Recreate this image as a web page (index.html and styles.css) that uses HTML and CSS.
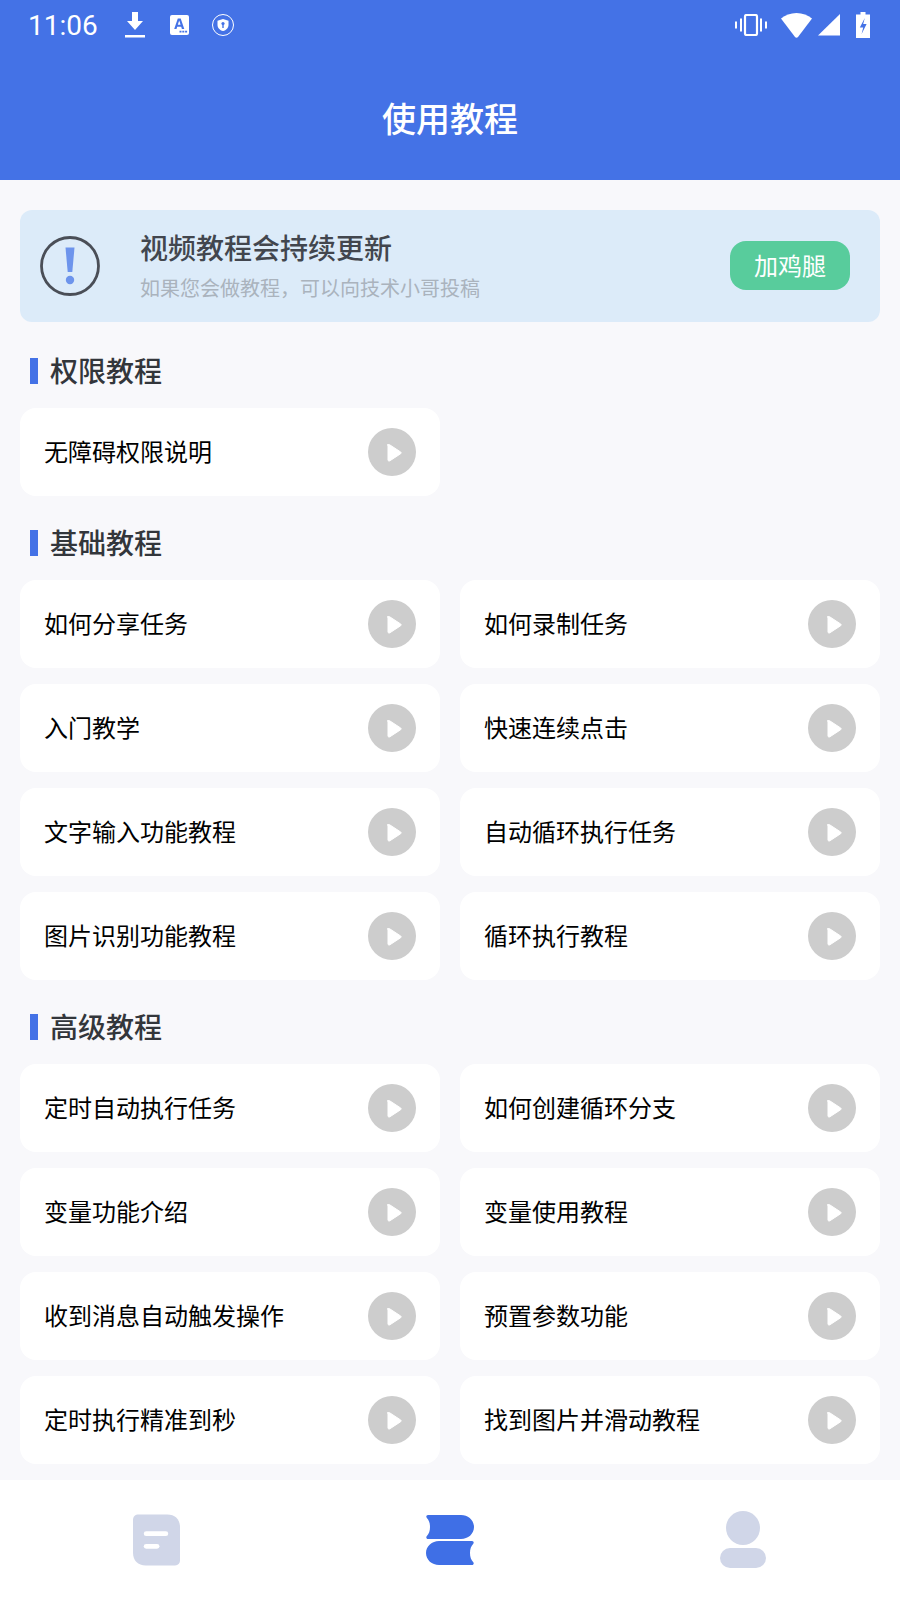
FILE: index.html
```html
<!DOCTYPE html>
<html lang="zh-CN">
<head>
<meta charset="UTF-8">
<title>使用教程</title>
<link rel="stylesheet" href="styles.css">
</head>
<body>

<svg class="defs" width="0" height="0">
  <symbol id="play" viewBox="0 0 48 48">
    <circle cx="24" cy="24" r="24" fill="#cdcdcd"/>
    <path d="M20 16v16c0 .9 1 1.400 1.700.9l11-7.200c.6-.4.6-1.300 0-1.700l-11-7.200c-.7-.5-1.700 0-1.700.9z" fill="#fff" stroke="#fff" stroke-width="1" stroke-linejoin="round"/>
  </symbol>
</svg>

<div class="app">
  <header class="header">
    <div class="status-bar">
      <span class="time">11:06</span>
      <svg class="ic-download" width="20" height="26" viewBox="0 0 20 26"><path d="M7 0h6v9h5l-8 9-8-9h5z" fill="#fff"/><rect x="0" y="23" width="20" height="2.500" fill="#fff"/></svg>
      <svg class="ic-translate" width="19" height="20" viewBox="0 0 19 20"><rect width="19" height="20" rx="2" fill="#fff"/><path d="M7.800 3.500h2.900l3.600 10.500h-2.400l-.7-2.300H7.200L6.500 14H4.200zM7.800 9.800h2.800L9.200 5.400z" fill="#4472e6"/><path d="M9.500 15.800h2v1.800h-2zM12.300 15.800h2v1.800h-2zM15.100 15.800h2v1.800h-2z" fill="#4472e6"/></svg>
      <svg class="ic-shield" width="22" height="22" viewBox="0 0 22 22"><circle cx="11" cy="11" r="10.500" fill="none" stroke="#fff" stroke-width="1"/><path d="M11 5l5.500 1.800v4.200c0 3-2.300 5.200-5.500 6-3.200-.8-5.500-3-5.500-6V6.800z" fill="#fff"/><circle cx="11" cy="9.500" r="1.600" fill="#4472e6"/><rect x="10.300" y="10" width="1.400" height="4" fill="#4472e6"/></svg>
      <span class="status-right">
        <svg width="34" height="22" viewBox="0 0 34 22"><rect x="11" y="1" width="12" height="20" rx="1.500" fill="none" stroke="#fff" stroke-width="2.200"/><path d="M6 4.500h2v13H6zM26 4.500h2v13h-2zM1 7.500h2v7H1zM31 7.500h2v7h-2z" fill="#fff"/></svg>
        <svg width="31" height="25" viewBox="0 0 31 25"><path d="M15.500 0C9.500 0 4.200 2.100 0 5.500l14 18.500c.8 1 2.200 1 3 0L31 5.500C26.800 2.100 21.500 0 15.500 0z" fill="#fff"/></svg>
        <svg width="22" height="22" viewBox="0 0 22 22"><path d="M22 0v21.500H0z" fill="#fff"/></svg>
        <svg width="14" height="26" viewBox="0 0 14 26"><path d="M4.500 0h5v2.500H14V26H0V2.500h4.500z" fill="#fff"/><path d="M8.800 6L3.800 15.500h3.400L5.600 22l5-10H7.200z" fill="#4472e6"/></svg>
      </span>
    </div>
    <h1 class="page-title">使用教程</h1>
  </header>

  <main class="content">
    <div class="banner">
      <svg class="banner-icon" width="60" height="60" viewBox="0 0 60 60">
        <circle cx="30" cy="30" r="28.500" fill="none" stroke="#4a4e57" stroke-width="2.800"/>
        <path d="M25.500 11.500h9l-2.200 24.500h-4.600z" fill="#6d94ec"/>
        <circle cx="30" cy="44" r="4.200" fill="#6d94ec"/>
      </svg>
      <div class="banner-text">
        <div class="banner-title">视频教程会持续更新</div>
        <div class="banner-sub">如果您会做教程，可以向技术小哥投稿</div>
      </div>
      <div class="banner-btn"><span>加鸡腿</span></div>
    </div>

    <section class="section">
      <h2 class="section-title">权限教程</h2>
      <div class="grid">
        <div class="card"><span>无障碍权限说明</span><svg class="play"><use href="#play"/></svg></div>
      </div>
    </section>

    <section class="section">
      <h2 class="section-title">基础教程</h2>
      <div class="grid">
        <div class="card"><span>如何分享任务</span><svg class="play"><use href="#play"/></svg></div>
        <div class="card"><span>如何录制任务</span><svg class="play"><use href="#play"/></svg></div>
        <div class="card"><span>入门教学</span><svg class="play"><use href="#play"/></svg></div>
        <div class="card"><span>快速连续点击</span><svg class="play"><use href="#play"/></svg></div>
        <div class="card"><span>文字输入功能教程</span><svg class="play"><use href="#play"/></svg></div>
        <div class="card"><span>自动循环执行任务</span><svg class="play"><use href="#play"/></svg></div>
        <div class="card"><span>图片识别功能教程</span><svg class="play"><use href="#play"/></svg></div>
        <div class="card"><span>循环执行教程</span><svg class="play"><use href="#play"/></svg></div>
      </div>
    </section>

    <section class="section">
      <h2 class="section-title">高级教程</h2>
      <div class="grid">
        <div class="card"><span>定时自动执行任务</span><svg class="play"><use href="#play"/></svg></div>
        <div class="card"><span>如何创建循环分支</span><svg class="play"><use href="#play"/></svg></div>
        <div class="card"><span>变量功能介绍</span><svg class="play"><use href="#play"/></svg></div>
        <div class="card"><span>变量使用教程</span><svg class="play"><use href="#play"/></svg></div>
        <div class="card"><span>收到消息自动触发操作</span><svg class="play"><use href="#play"/></svg></div>
        <div class="card"><span>预置参数功能</span><svg class="play"><use href="#play"/></svg></div>
        <div class="card"><span>定时执行精准到秒</span><svg class="play"><use href="#play"/></svg></div>
        <div class="card"><span>找到图片并滑动教程</span><svg class="play"><use href="#play"/></svg></div>
      </div>
    </section>
  </main>

  <nav class="tabbar">
    <div class="tab">
      <svg width="47" height="52" viewBox="0 0 48 52"><path d="M6 0h29c8 0 13 5 13 13v34c0 3-2 5-5 5H13C5 52 0 47 0 39V6C0 2 2 0 6 0z" fill="#d0d6e8"/><rect x="11" y="17" width="25" height="5" rx="2.500" fill="#fff"/><rect x="11" y="30" width="16" height="5" rx="2.500" fill="#fff"/></svg>
    </div>
    <div class="tab">
      <svg width="48" height="50" viewBox="0 0 48 50"><path d="M2 0h33c7 0 13 5 13 12s-6 12-13 12H2c-1.500 0-2.200-1.500-1.300-2.700C3 18.800 4 16 4 12S3 5.200.7 2.700C-.2 1.500.5 0 2 0z" fill="#3f6fe6"/><path d="M46 26H13C6 26 0 31 0 38s6 12 13 12h33c1.500 0 2.200-1.500 1.300-2.700C45 44.800 44 42 44 38s1-6.800 3.300-9.300c.9-1.200.2-2.700-1.300-2.700z" fill="#3f6fe6"/></svg>
    </div>
    <div class="tab tab-user">
      <span class="user-head"></span>
      <span class="user-body"></span>
    </div>
  </nav>
</div>

</body>
</html>
```

FILE: styles.css
```css
html, body {margin: 0; padding: 0;}
body {font-family: "Noto Sans CJK SC", "Noto Sans", sans-serif; background: #f8f8fb; color: #000;}
.defs {position: absolute;}
.app {width: 900px; height: 1600px; display: flex; flex-direction: column; overflow: hidden;}

/* header + status bar */
.header {height: 180px; background: #4472e6; color: #fff; flex: none;}
.status-bar {height: 50px; display: flex; align-items: center; padding: 0 30px 0 28px;}
.status-bar svg {flex: none; display: block;}
.time {font-family: Roboto, sans-serif; font-size: 28px; width: 97px;}
.ic-download {margin-right: 25px;}
.ic-translate {margin-right: 23px;}
.status-right {margin-left: auto; display: flex; align-items: center;}
.status-right svg:nth-child(1) {margin-right: 13px;}
.status-right svg:nth-child(2) {margin-right: 6px;}
.status-right svg:nth-child(3) {margin-right: 16px;}
.page-title {margin: 0; padding-top: 44px; text-align: center; font-size: 34px; line-height: 48px; font-weight: 500;}

/* scroll area */
.content {flex: 1; padding: 30px 20px 0;}
.banner {height: 112px; margin-bottom: 2px; background: #dcebf9; border-radius: 12px; display: flex; align-items: center; padding: 0 30px 0 20px; box-sizing: border-box;}
.banner-icon {flex: none;}
.banner-text {flex: 1; margin-left: 40px;}
.banner-title {font-size: 28px; line-height: 38px; font-weight: 500; color: #42464e; margin-top: -1px;}
.banner-sub {font-size: 20px; line-height: 30px; color: #aab3bd; margin-top: 7px;}
.banner-btn {width: 120px; height: 49px; margin-top: -2px; border-radius: 16px; background: #58cc9c; color: #fff; font-size: 24px; line-height: 47px; text-align: center;}

.section-title {margin: 0; height: 84px; box-sizing: border-box; padding: 27px 0 0 10px; display: flex; align-items: flex-start; font-size: 28px; line-height: 38px; font-weight: 500; color: #33363b;}
.section-title::before {content: ""; width: 8px; height: 26px; margin: 7px 12px 0 0; background: #4472e6;}
.grid {display: grid; grid-template-columns: 420px 420px; gap: 16px 20px;}
.card {height: 88px; background: #fff; border-radius: 16px; display: flex; align-items: center; justify-content: space-between; padding: 0 24px; font-size: 24px;}
.card span {margin-bottom: 4px;}
.play {width: 48px; height: 48px; flex: none;}

/* bottom tabs */
.tabbar {height: 120px; flex: none; background: #fff; display: grid; grid-template-columns: 1fr 1fr 1fr; padding: 0 10px;}
.tab {display: flex; flex-direction: column; align-items: center; justify-content: center;}
.tab-user {padding-bottom: 1px;}
.user-head {width: 34px; height: 34px; border-radius: 50%; background: #d0d6e8;}
.user-body {width: 46px; height: 20px; margin-top: 3px; border-radius: 10px; background: #d0d6e8;}
```
